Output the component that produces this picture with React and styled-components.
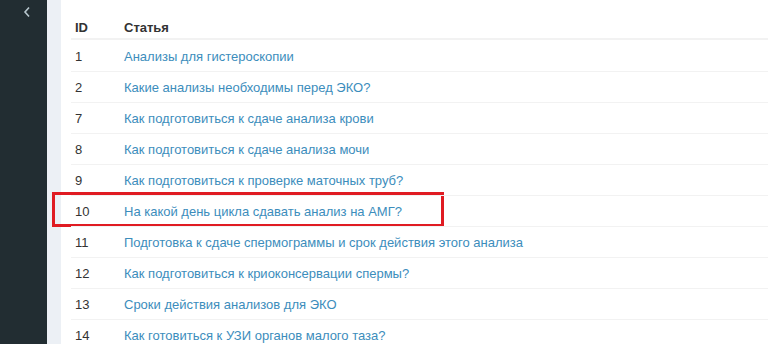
import React from "react";
import styled, { createGlobalStyle } from "styled-components";

const Global = createGlobalStyle`
  html, body { margin: 0; padding: 0; }
  body {
    font-family: "Liberation Sans", Arial, sans-serif;
    font-size: 13px;
    color: #333;
    background: #ecf0f5;
    overflow: hidden;
  }
`;

const Page = styled.div`
  display: flex;
  width: 768px;
  height: 344px;
  overflow: hidden;
`;

const Sidebar = styled.aside`
  width: 47px;
  flex: 0 0 47px;
  background: #222d32;
  display: flex;
  justify-content: flex-start;
  padding: 6px 0 0 23px;
  box-sizing: border-box;
`;

const Gutter = styled.div`
  width: 14px;
  flex: 0 0 14px;
  background: #ecf0f5;
`;

const Panel = styled.main`
  flex: 1;
  background: #fff;
  padding-left: 10px;
  min-width: 0;
`;

const Table = styled.div`
  display: grid;
  grid-template-columns: 53px 1fr;
`;

const Row = styled.div`
  display: contents;
`;

const HeadCell = styled.div`
  height: 40px;
  border-bottom: 2px solid #f2f2f2;
  font-weight: bold;
  color: #333;
  display: flex;
  align-items: flex-end;
  padding: 0 0 3px ${(p) => (p.$text ? 0 : 4)}px;
  box-sizing: border-box;
`;

const Cell = styled.div`
  position: relative;
  height: 31px;
  box-sizing: border-box;
  border-top: ${(p) => (p.$first ? "none" : "1px solid #f2f2f2")};
  display: flex;
  align-items: center;
  padding: 1px 0 0 4px;
  white-space: nowrap;
`;

const LinkCell = styled(Cell)`
  padding-left: 0;
`;

const Link = styled.a`
  color: #3c8dbc;
  text-decoration: none;
`;

const Highlight = styled.div`
  position: absolute;
  left: -19px;
  top: -4px;
  width: 392px;
  height: 35px;
  border: 3px solid #e01b22;
  box-sizing: border-box;
  pointer-events: none;
`;

const rows = [
  [1, "Анализы для гистероскопии"],
  [2, "Какие анализы необходимы перед ЭКО?"],
  [7, "Как подготовиться к сдаче анализа крови"],
  [8, "Как подготовиться к сдаче анализа мочи"],
  [9, "Как подготовиться к проверке маточных труб?"],
  [10, "На какой день цикла сдавать анализ на АМГ?", true],
  [11, "Подготовка к сдаче спермограммы и срок действия этого анализа"],
  [12, "Как подготовиться к криоконсервации спермы?"],
  [13, "Сроки действия анализов для ЭКО"],
  [14, "Как готовиться к УЗИ органов малого таза?"],
];

export default function App() {
  return (
    <>
      <Global />
      <Page>
        <Sidebar>
          <svg width="8" height="12" viewBox="0 0 8 12">
            <path d="M6 1.5 L2 6 L6 10.5" fill="none" stroke="#b8c7ce" strokeWidth="1.6" />
          </svg>
        </Sidebar>
        <Gutter />
        <Panel>
          <Table>
            <Row>
              <HeadCell>ID</HeadCell>
              <HeadCell $text>Статья</HeadCell>
            </Row>
            {rows.map(([id, title, hl], i) => (
              <Row key={id}>
                <Cell $first={i === 0}>
                  {hl && <Highlight />}
                  {id}
                </Cell>
                <LinkCell $first={i === 0}>
                  <Link href="#">{title}</Link>
                </LinkCell>
              </Row>
            ))}
          </Table>
        </Panel>
      </Page>
    </>
  );
}
